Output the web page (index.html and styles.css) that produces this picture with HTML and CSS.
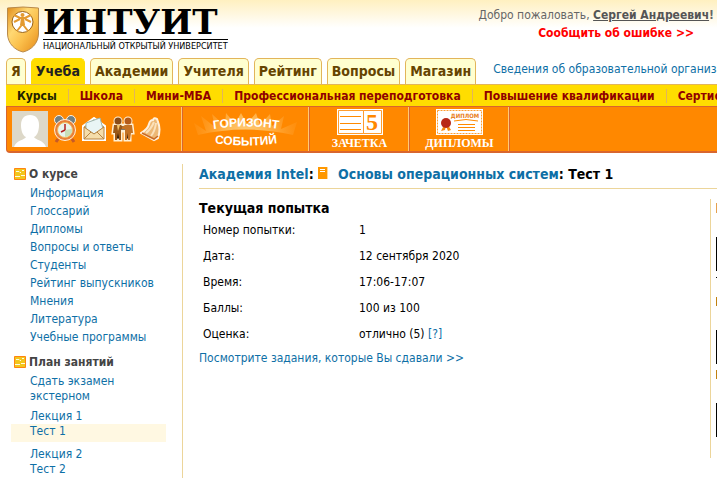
FILE: index.html
```html
<!DOCTYPE html>
<html lang="ru">
<head>
<meta charset="utf-8">
<title>ИНТУИТ — Тест 1</title>
<link rel="stylesheet" href="styles.css">
</head>
<body>
<header class="header">
  <a class="logo" href="#">
    <svg class="shield" width="34" height="47" viewBox="0 0 34 47">
      <defs>
        <linearGradient id="gold" x1="0" y1="0" x2="1" y2="1">
          <stop offset="0" stop-color="#e08a18"/><stop offset=".35" stop-color="#ffd873"/><stop offset=".6" stop-color="#fbc04c"/><stop offset="1" stop-color="#e58a1a"/>
        </linearGradient>
      </defs>
      <path d="M1.500 2Q17 0 32.500 2V28C32 38 25 44 17 46C9 44 2 38 1.500 28Z" fill="url(#gold)" stroke="#b98a4a"/>
      <circle cx="16.500" cy="16" r="10.500" fill="#fff" stroke="#9a6318"/>
      <circle cx="16.500" cy="9" r="2" fill="#e39a30"/>
      <path d="M8 9L14 12H19L25 9M16.500 12V18L11 25M16.500 18L22 25M14 13L8 16M19 13L25 16" fill="none" stroke="#e39a30" stroke-width="2"/>
      <path d="M15 12H18L19 19H14Z" fill="#e39a30"/>
    </svg>
    <span class="brand">
      <span class="brand-name">ИНТУИТ</span>
      <span class="brand-sub">НАЦИОНАЛЬНЫЙ ОТКРЫТЫЙ УНИВЕРСИТЕТ</span>
    </span>
  </a>
  <div class="welcome">
    <div>Добро пожаловать, <a href="#">Сергей Андреевич</a><b>!</b></div>
    <a class="report" href="#">Сообщить об ошибке &gt;&gt;</a>
  </div>
</header>
<div class="tabs-row">
  <nav class="tabs">
    <a href="#">Я</a><a class="active" href="#">Учеба</a><a href="#">Академии</a><a href="#">Учителя</a><a href="#">Рейтинг</a><a href="#">Вопросы</a><a href="#">Магазин</a>
  </nav>
  <a class="org" href="#">Сведения об образовательной организации</a>
</div>
<nav class="subnav">
  <a class="active" href="#">Курсы</a><a href="#">Школа</a><a href="#">Мини-МБА</a><a href="#">Профессиональная переподготовка</a><a href="#">Повышение квалификации</a><a href="#">Сертификация</a>
</nav>
<div class="toolbar">
  <div class="cell personal">
    <svg width="36" height="36" viewBox="0 0 36 36"><path fill="#ddd8c8" d="M0 0H36V36H0Z"/><path fill="#fff" d="M18 4C24 4 27 8 27 14C27 20 25 25 22 26C23 29 32 29 34 36H2C4 29 13 29 14 26C11 25 9 20 9 14C9 8 12 4 18 4Z"/></svg>
    <svg width="24" height="28" viewBox="0 0 24 28"><g stroke="#fff0dc"><path d="M5 24L3 27M19 24L21 27" stroke="#c65a28" stroke-width="3"/><circle cx="6" cy="5" r="4.500" fill="#718083"/><circle cx="18" cy="5" r="4.500" fill="#718083"/><circle cx="12" cy="15" r="10.500" fill="#e8803a"/></g><circle cx="12" cy="15" r="7.500" fill="#e8f3ee" stroke="#f1b85c"/><path d="M12 22A7 7 0 0 0 19 14L12 15Z" fill="#c8dfba"/><path d="M12 15V9M12 15L8 17" stroke="#b32020" stroke-width="1.500"/></svg>
    <svg width="24" height="24" viewBox="0 0 24 24"><path d="M1 9L12 1L23 9V23H1Z" fill="#c99345" stroke="#fff" stroke-width="2"/><path d="M4 6L18 1L21 12L12 17L4 12Z" fill="#e9f5f5" stroke="#9eb8b3"/><path d="M2 10L12 17L22 10V22H2Z" fill="#f5ddaa" stroke="#b98340"/><path d="M2 22L9 15M22 22L15 15" stroke="#b98340"/></svg>
    <svg width="24" height="26" viewBox="0 0 24 26"><g stroke="#fff0d4" stroke-width="3"><circle cx="7" cy="5" r="3"/><circle cx="17" cy="5" r="3"/><path d="M3 9H21L22 17H19V24H14V15H10V24H4V17H2Z"/></g><circle cx="7" cy="5" r="3.500" fill="#8a4c17"/><path d="M3 9H10L12 11V13H10V24H8L7 17L6 24H4V17H2Z" fill="#9a5817"/><circle cx="17" cy="5" r="3.500" fill="#b35a18"/><path d="M14 9H21L22 17H20L19 24H17V17L16 24H14V13H11V11Z" fill="#c47324"/><path d="M6 9L7 15L9 9" fill="#f4c56b"/></svg>
    <svg width="22" height="26" viewBox="0 0 22 26"><path d="M13 4Q14 1 17 3L18 6Q21 13 18 22L14 24L1 17Q8 13 9 8Q10 4 13 4Z" fill="#edb875" stroke="#fff0dc" stroke-width="2"/><path d="M14 6Q11 13 6 17M16 7Q15 15 11 20" stroke="#fbe1bb" stroke-width="2" fill="none"/><path d="M2 17L14 23L18 20" stroke="#c96b25" fill="none" stroke-width="1.500"/></svg>
  </div>
  <a class="cell" href="#" aria-label="Горизонт событий">
    <svg width="106" height="40" viewBox="0 0 106 40">
      <defs>
        <radialGradient id="sun" gradientUnits="userSpaceOnUse" cx="53" cy="28" r="52"><stop offset="0" stop-color="#ffd080"/><stop offset=".4" stop-color="#ffc468" stop-opacity=".8"/><stop offset="1" stop-color="#ff9d28" stop-opacity=".3"/></radialGradient>
        <path id="arc" d="M14 21Q53 14 92 21"/>
        <path id="arc-low" d="M14 33Q53 40 92 33"/>
      </defs>
      <path d="M5 26L1 14L13 22L8 7L22 18L19 5L32 17L33 4L42 15L48 4L54 15L63 4L67 16L77 5L79 17L91 7L88 20L104 13L100 26Q53 15 5 26Z" fill="url(#sun)"/>
      <g class="horizon"><text><textPath href="#arc" startOffset="50%">ГОРИЗОНТ</textPath></text><text><textPath href="#arc-low" startOffset="50%">СОБЫТИЙ</textPath></text></g>
    </svg>
  </a>
  <a class="cell labelled" href="#">
    <svg width="46" height="26" viewBox="0 0 46 26"><path fill="#fff" d="M0 0H46V26H0Z"/><path d="M1.500 1.500H26.500V24.500H1.500ZM26.500 1.500H44.500V24.500H26.500Z" fill="none" stroke="#ff9d2e"/><path d="M3 7.500H24M3 14.500H24M3 20.500H24" stroke="#ff8a00"/><text class="five" x="35" y="21">5</text></svg>
    <span>ЗАЧЕТКА</span>
  </a>
  <a class="cell labelled" href="#">
    <svg width="47" height="26" viewBox="0 0 47 26"><path fill="#fff" d="M0 0H47V26H0Z"/><path d="M1.500 1.500H45.500V24.500H1.500Z" fill="none" stroke="#ff9d2e" stroke-dasharray="2 1"/><text class="diploma-word" x="29" y="9">ДИПЛОМ</text><path d="M18 12Q30 9 42 12M22 15.500H39M22 18.500H39M22 21.500H39" stroke="#ff8a00" fill="none"/><path d="M8 16L5 22L9 21L10 17L12 22L15 21L12 16" fill="#f58a10"/><circle cx="10" cy="14" r="5" fill="#b82918"/></svg>
    <span>ДИПЛОМЫ</span>
  </a>
</div>
<div class="columns">
  <aside class="sidebar">
    <h2><svg width="12" height="12" viewBox="0 0 12 12"><path d="M.5 .5H11.500V11.500H.5Z" fill="#f2c61c" stroke="#ff8410"/><path d="M2 3.500H5L6 4.500H7M8 2.500H10M1 8.500H6M7 7.500H11" fill="none" stroke="#fffbe0"/></svg>О курсе</h2>
    <ul>
      <li><a href="#">Информация</a></li><li><a href="#">Глоссарий</a></li><li><a href="#">Дипломы</a></li><li><a href="#">Вопросы и ответы</a></li><li><a href="#">Студенты</a></li><li><a href="#">Рейтинг выпускников</a></li><li><a href="#">Мнения</a></li><li><a href="#">Литература</a></li><li><a href="#">Учебные программы</a></li>
    </ul>
    <h2><svg width="12" height="12" viewBox="0 0 12 12"><path d="M.5 .5H11.500V11.500H.5Z" fill="#f2c61c" stroke="#ff8410"/><path d="M2 3.500H5L6 4.500H7M8 2.500H10M1 8.500H6M7 7.500H11" fill="none" stroke="#fffbe0"/></svg>План занятий</h2>
    <ul class="plan">
      <li class="exam"><a href="#">Сдать экзамен экстерном</a></li>
      <li><a href="#">Лекция 1</a></li><li class="current"><a href="#">Тест 1</a></li>
      <li><a href="#">Лекция 2</a></li><li><a href="#">Тест 2</a></li>
    </ul>
  </aside>
  <main class="main">
    <h1><a href="#">Академия Intel</a>: <svg width="10" height="12" viewBox="0 0 10 12"><path fill="#ff9800" d="M0 0H9V12H0Z"/><path stroke="#fff" d="M2 2.500H7M2 4.500H7"/><path stroke="#ffd79a" d="M9.500 0V12"/></svg><a href="#">Основы операционных систем</a>: Тест 1</h1>
    <div class="content">
      <section class="attempt">
        <h2>Текущая попытка</h2>
        <table>
          <tr><th scope="row">Номер попытки:</th><td>1</td></tr>
          <tr><th scope="row">Дата:</th><td>12 сентября 2020</td></tr>
          <tr><th scope="row">Время:</th><td>17:06-17:07</td></tr>
          <tr><th scope="row">Баллы:</th><td>100 из 100</td></tr>
          <tr><th scope="row">Оценка:</th><td>отлично (5) <a href="#">[?]</a></td></tr>
        </table>
        <a href="#">Посмотрите задания, которые Вы сдавали &gt;&gt;</a>
      </section>
      <aside class="promo">
        <i class="mark light"></i><i class="cover"></i><i class="dash"></i>
        <i class="mark"></i><i class="cover"></i>
        <i class="mark"></i><i class="cover"></i>
      </aside>
    </div>
  </main>
</div>
</body>
</html>
```
FILE: styles.css
```css
* { box-sizing: border-box; }
body {
  margin: 0;
  overflow: hidden;
  background: #fff linear-gradient(#fff0c0, #fff 28px) no-repeat;
  background-size: 100% 28px;
  color: #000;
  font: 12px/18px "DejaVu Sans Condensed", "DejaVu Sans", sans-serif;
}
a { color: #0e6fa6; text-decoration: none; }
svg { display: block; flex: none; }
h1, h2, ul { margin: 0; padding: 0; }
ul { list-style: none; }

.header { display: flex; justify-content: space-between; height: 58px; padding: 6px 3px 0 6px; }
.logo { display: flex; gap: 3px; color: #000; }
.brand { display: flex; flex-direction: column; }
.brand-name { border-bottom: 1px solid #000; font: bold 34px/33px "DejaVu Serif", serif; white-space: nowrap; }
.brand-sub { font: 9px/12px "DejaVu Sans Condensed", sans-serif; white-space: nowrap; }
.welcome { color: #666; white-space: nowrap; }
.welcome a { color: #555; font-weight: bold; text-decoration: underline; }
.welcome .report { display: block; padding-right: 20px; color: #f00; text-align: right; text-decoration: none; }

.tabs-row { display: flex; align-items: flex-end; gap: 17px; height: 26px; padding-left: 6px; white-space: nowrap; }
.tabs { display: flex; gap: 5px; }
.tabs a {
  height: 26px; padding: 0 4px;
  border: 1px solid #e2b55a; border-bottom: 0; border-radius: 5px 5px 0 0;
  background: #ffffd0; color: #664400;
  font-size: 14px; font-weight: bold; line-height: 25px;
}
.tabs .active { background: #fd0; border-color: #fd0; color: #222; }
.org { line-height: 30px; }

.subnav { display: flex; height: 22px; margin-left: 6px; border-top: 1px solid #e2b55a; background: #fd0; white-space: nowrap; align-items: center; }
.subnav a { padding: 0 11px; border-left: 1px solid #e2b55a; color: #900000; font-weight: bold; line-height: 14px; }
.subnav .active { border-left: 0; color: #222200; }

.toolbar { display: flex; height: 47px; margin-left: 6px; border: 1px solid #d9662e; border-right: 0; border-bottom-width: 2px; border-radius: 0 0 0 4px; background: #ff8800; }
.cell { display: flex; align-items: center; justify-content: center; padding: 0 10px; border-right: 1px solid #d9662e; box-shadow: inset -1px 0 #ffc978; }
.personal { gap: 5px; width: 176px; padding: 0 5px; justify-content: flex-start; }
.labelled { flex-direction: column; width: 100px; padding: 2px 0 0; color: #fff; font: bold 12px/17px "Liberation Serif", serif; }
.horizon { fill: #fff; font: bold 12px "Liberation Sans", sans-serif; text-anchor: middle; }
.five { fill: #ff8800; font: bold 24px "Liberation Serif", serif; text-anchor: middle; }
.diploma-word { fill: #e77b16; font: bold 6px "DejaVu Sans Condensed", sans-serif; text-anchor: middle; }

.columns { display: flex; padding-top: 11px; }
.sidebar { flex: none; width: 183px; min-height: 315px; padding: 0 16px 0 11px; border-right: 1px solid #ecd59a; }
.sidebar h2 { display: flex; align-items: center; gap: 3px; padding-left: 3px; color: #444; font-size: 12px; line-height: 20px; }
.sidebar ul + h2 { margin-top: 6px; }
.sidebar li { padding-left: 19px; }
.plan li { line-height: 15px; }
.plan .exam { padding-top: 2px; padding-bottom: 5px; }
.plan .current { height: 18px; margin-bottom: 5px; background: #fff8e2; }

.main { flex: 1; min-width: 0; padding-left: 16px; }
h1 { display: flex; height: 25px; border-bottom: 1px solid #ecd59a; font-size: 14px; line-height: 20px; white-space: pre; }
h1 svg { margin: 3px 10px 0 0; }
.content { display: flex; justify-content: space-between; padding-top: 10px; }
.attempt h2 { font-size: 14px; line-height: 18px; }
table { border-collapse: collapse; }
th, td { height: 26px; padding: 0 4px; font-weight: normal; text-align: left; }
th { width: 156px; }
.attempt > a { display: block; line-height: 22px; }
.promo { width: 7px; height: 259px; padding: 4px 0 0 5px; overflow: hidden; border-left: 1px solid #ecd59a; }
.promo i { display: block; width: 1px; background: #000; }
.promo .mark { height: 9px; background: #c08010; }
.promo .light { height: 10px; background: #e5a050; }
.promo .cover { height: 34px; margin: 24px 0 6px; }
.promo .dash { height: 1px; margin-bottom: 19px; }
```
